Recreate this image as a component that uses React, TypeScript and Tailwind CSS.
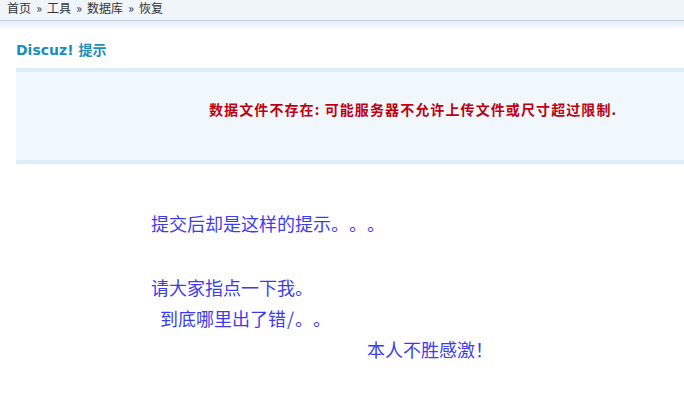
function P({ c, center }: { c: string; center?: boolean }) {
  return <span className={center ? "inline-block w-[18px] text-center" : "inline-block w-[18px] text-left"}>{c}</span>;
}

export default function App() {
  const cjk = { fontFamily: '"Noto Sans CJK SC", "Noto Sans", sans-serif' };
  const crumbs = ["首页", "工具", "数据库", "恢复"];
  return (
    <div className="w-[684px] h-[405px] bg-white overflow-hidden" style={cjk}>
      <div className="h-[21px] bg-[#f0f5fa] border-b border-[#c3d1e0] flex items-start pt-[1px] pl-[7px] text-[12px] leading-[14px] text-[#333333]">
        {crumbs.map((c, i) => (
          <span key={c} className="flex">
            {i > 0 && <span className="w-[16px] text-center">»</span>}
            <span>{c}</span>
          </span>
        ))}
      </div>
      <div className="h-[10px] bg-gradient-to-b from-[#e6eef8] to-white" />
      <div className="h-[37px] pl-[16px] flex items-center">
        <span
          className="text-[14px] font-bold text-[#1a8db8] leading-none"
          style={{ fontFamily: '"DejaVu Sans", "Noto Sans CJK SC", sans-serif' }}
        >
          Discuz! 提示
        </span>
      </div>
      <div className="ml-[16px] h-[96px] bg-[#f0f8fd] border-t-[4px] border-b-[4px] border-[#dcedf9] flex items-center pl-[193px]">
        <span className="text-[14px] font-bold text-[#c00010] leading-none -mt-[14px] tracking-[1.1px]">
          数据文件不存在: 可能服务器不允许上传文件或尺寸超过限制.
        </span>
      </div>
      <div className="pl-[151px] pt-[43px] text-[18px] text-[#3c3cee]">
        <div className="h-[32px] leading-[32px] flex">
          提交后却是这样的提示<P c="。" /><P c="。" /><P c="。" />
        </div>
        <div className="h-[32px]" />
        <div className="h-[32px] leading-[32px] flex">
          请大家指点一下我<P c="。" />
        </div>
        <div className="h-[31px] leading-[31px] pl-[9px] flex">
          到底哪里出了错<span className="inline-block w-[9px] text-center">/</span><P c="。" /><P c="。" />
        </div>
        <div className="h-[31px] leading-[31px] pl-[216px] flex">
          本人不胜感激<P c="！" center />
        </div>
      </div>
    </div>
  );
}
